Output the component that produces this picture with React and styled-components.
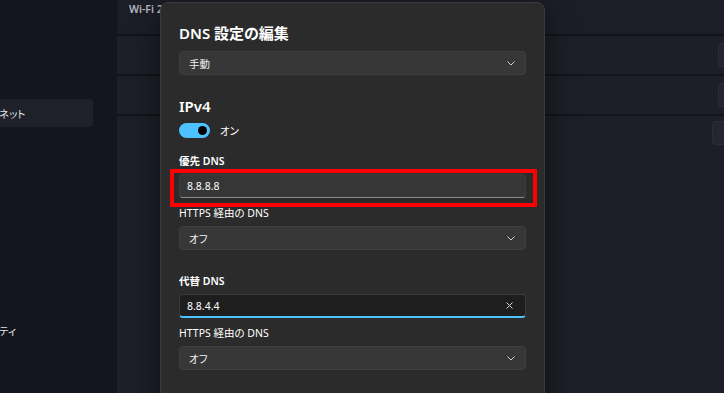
import React from 'react'
import styled, { createGlobalStyle } from 'styled-components'

const GlobalStyle = createGlobalStyle`
  html, body {
    margin: 0;
    padding: 0;
    background: #1b1e27;
  }
  body {
    font-family: "Noto Sans", "Noto Sans CJK JP", sans-serif;
    font-feature-settings: "palt";
    -webkit-font-smoothing: antialiased;
  }
  #root {
    width: 724px;
    height: 393px;
  }
`

const Window = styled.div`
  position: relative;
  display: flex;
  width: 724px;
  height: 393px;
  overflow: hidden;
  background: #1b1e27;
`

const Sidebar = styled.nav`
  width: 117px;
  flex-shrink: 0;
  box-sizing: border-box;
  padding-top: 99px;
  background: #13161e;
  display: flex;
  flex-direction: column;
`

const NavItem = styled.div`
  width: 93px;
  height: 28px;
  margin-top: ${p => p.$gap || 0}px;
  display: flex;
  align-items: center;
  border-radius: 0 4px 4px 0;
  background: ${p => (p.$active ? '#1e2129' : 'transparent')};
  color: #e2e3e6;
  font-size: 10.5px;
  white-space: nowrap;
  span {
    margin-left: -1px;
  }
`

const Content = styled.main`
  flex: 1;
  display: flex;
  flex-direction: column;
  gap: 2px;
  background: #12141b;
`

const Header = styled.div`
  height: 34px;
  flex-shrink: 0;
  padding-left: 12px;
  background: #1b1e27;
  color: #b8bbc1;
  font-size: 10.5px;
  font-weight: 600;
  line-height: 18px;
`

const Row = styled.div`
  height: ${p => (p.$grow ? 'auto' : '38px')};
  flex: ${p => (p.$grow ? 1 : 'none')};
  display: flex;
  justify-content: flex-end;
  align-items: flex-start;
  padding-top: ${p => p.$pad || 7}px;
  box-sizing: border-box;
  background: #1c1f28;
`

const RowButton = styled.div`
  width: 60px;
  height: 24px;
  margin-right: ${p => -(60 - p.$visible)}px;
  box-sizing: border-box;
  border-radius: 4px;
  background: #23262e;
  border: 1px solid #2b2e36;
`

const Dialog = styled.section`
  position: absolute;
  left: 160px;
  top: 2px;
  width: 385px;
  height: 420px;
  box-sizing: border-box;
  padding: 0 18px;
  display: flex;
  flex-direction: column;
  background: #2b2b2b;
  border: 1px solid #3a3a3a;
  border-radius: 8px;
  box-shadow: 0 8px 32px rgba(0, 0, 0, 0.45);
  color: #ffffff;
`

const Title = styled.h2`
  margin: 20px 0 0;
  font-size: 15px;
  font-weight: 600;
  line-height: 20px;
`

const SubTitle = styled.h3`
  margin: 21px 0 0;
  font-size: 15px;
  font-weight: 600;
  line-height: 20px;
`

const Select = styled.div`
  height: 24px;
  margin-top: ${p => p.$mt || 0}px;
  box-sizing: border-box;
  padding: 0 10px 0 9px;
  display: flex;
  align-items: center;
  justify-content: space-between;
  background: #373737;
  border: 1px solid #3e3e3e;
  border-radius: 4px;
  font-size: 10.5px;
  color: #f2f2f2;
`

const ToggleRow = styled.div`
  margin-top: 7px;
  height: 15px;
  display: flex;
  align-items: center;
  gap: 10px;
  font-size: 10.5px;
`

const Track = styled.div`
  width: 31px;
  height: 15px;
  box-sizing: border-box;
  padding-right: 3px;
  display: flex;
  align-items: center;
  justify-content: ${p => (p.$on ? 'flex-end' : 'flex-start')};
  border-radius: 8px;
  background: ${p => (p.$on ? '#4cc2ff' : 'transparent')};
`

const Knob = styled.div`
  width: 9px;
  height: 9px;
  border-radius: 50%;
  background: #000000;
`

const Field = styled.div`
  margin-top: ${p => p.$mt}px;
  display: flex;
  flex-direction: column;
  gap: 6px;
`

const Label = styled.div`
  font-size: 10.5px;
  line-height: 14px;
  font-weight: ${p => (p.$strong ? 600 : 400)};
`

const InputBox = styled.div`
  position: relative;
  height: 24px;
  box-sizing: border-box;
  padding: 0 12px 0 7px;
  display: flex;
  align-items: center;
  justify-content: space-between;
  border-radius: 4px;
  border: 1px solid ${p => (p.$focused ? '#3a3a3a' : '#3d3d3d')};
  border-bottom: ${p => (p.$focused ? '2px solid #4cc2ff' : '1px solid #8a8a8a')};
  background: ${p => (p.$focused ? '#1e1e1e' : '#363636')};
  font-size: 10.5px;
  color: #ffffff;
`

const Highlight = styled.div`
  position: absolute;
  top: -6px;
  left: -10px;
  right: -12px;
  bottom: -10px;
  border: 4px solid #ff0000;
  pointer-events: none;
`

const Chevron = () => (
  <svg width="8" height="5" viewBox="0 0 8 5">
    <path d="M0.5 0.5 L4 4 L7.5 0.5" fill="none" stroke="#cfcfcf" strokeWidth="1" />
  </svg>
)

const Clear = () => (
  <svg width="7" height="7" viewBox="0 0 7 7">
    <path d="M0.5 0.5 L6.5 6.5 M6.5 0.5 L0.5 6.5" fill="none" stroke="#d4d4d4" strokeWidth="1" />
  </svg>
)

const App = () => {
  return (
    <Window>
      <GlobalStyle />
      <Sidebar>
        <NavItem $active><span>ネット</span></NavItem>
        <NavItem $gap={189}><span>ティ</span></NavItem>
      </Sidebar>
      <Content>
        <Header>Wi-Fi 2</Header>
        <Row><RowButton $visible={6} /></Row>
        <Row><RowButton $visible={6} /></Row>
        <Row $grow $pad={5}><RowButton $visible={12} /></Row>
      </Content>

      <Dialog>
        <Title>DNS 設定の編集</Title>
        <Select $mt={8}>
          <span>手動</span>
          <Chevron />
        </Select>

        <SubTitle>IPv4</SubTitle>
        <ToggleRow>
          <Track $on><Knob /></Track>
          <span>オン</span>
        </ToggleRow>

        <Field $mt={16}>
          <Label $strong>優先 DNS</Label>
          <InputBox>
            <span>8.8.8.8</span>
            <Highlight />
          </InputBox>
        </Field>
        <Field $mt={8}>
          <Label>HTTPS 経由の DNS</Label>
          <Select>
            <span>オフ</span>
            <Chevron />
          </Select>
        </Field>

        <Field $mt={24}>
          <Label $strong>代替 DNS</Label>
          <InputBox $focused>
            <span>8.8.4.4</span>
            <Clear />
          </InputBox>
        </Field>
        <Field $mt={8}>
          <Label>HTTPS 経由の DNS</Label>
          <Select>
            <span>オフ</span>
            <Chevron />
          </Select>
        </Field>
      </Dialog>
    </Window>
  )
}

export default App
